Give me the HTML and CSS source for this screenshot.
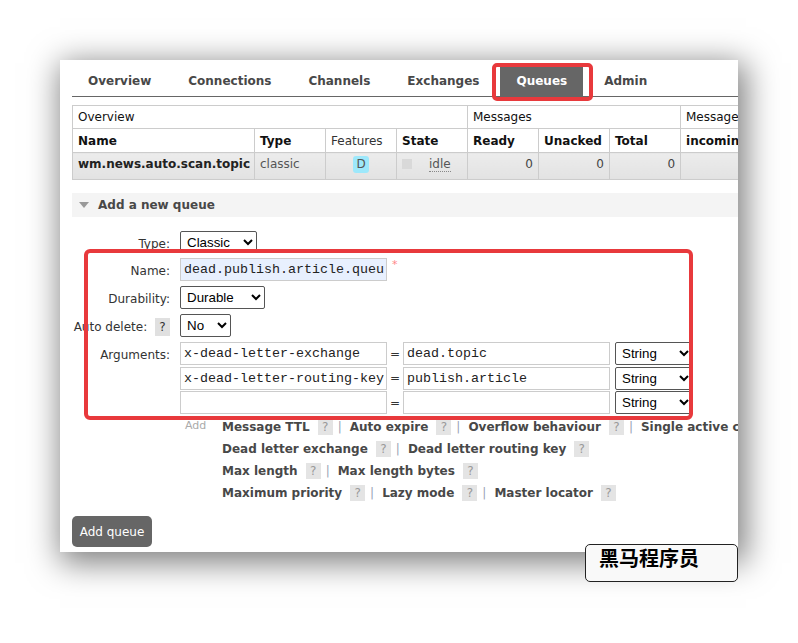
FILE: index.html
```html
<!DOCTYPE html>
<html lang="en">
<head>
<meta charset="utf-8">
<title>Queues</title>
<link rel="stylesheet" href="styles.css">
</head>
<body>
<div class="page">
  <div class="shot">
    <nav class="tabs">
      <a class="tab">Overview</a>
      <a class="tab">Connections</a>
      <a class="tab">Channels</a>
      <a class="tab">Exchanges</a>
      <a class="tab active">Queues</a>
      <a class="tab">Admin</a>
    </nav>

    <table class="qt">
      <colgroup>
        <col class="c-name"><col class="c-sm"><col class="c-sm"><col class="c-sm"><col class="c-sm"><col class="c-sm"><col class="c-sm"><col class="c-wide">
      </colgroup>
      <thead>
        <tr class="grp"><th colspan="4">Overview</th><th colspan="3">Messages</th><th>Message rates</th></tr>
        <tr class="hdr"><th>Name</th><th>Type</th><th class="light">Features</th><th>State</th><th>Ready</th><th>Unacked</th><th>Total</th><th>incoming</th></tr>
      </thead>
      <tbody>
        <tr class="row">
          <td class="name">wm.news.auto.scan.topic</td>
          <td class="type">classic</td>
          <td class="feat"><span class="badge">D</span></td>
          <td class="state"><span class="dot"></span><span class="idle">idle</span></td>
          <td class="num">0</td>
          <td class="num">0</td>
          <td class="num">0</td>
          <td></td>
        </tr>
      </tbody>
    </table>

    <section class="section">
      <h2 class="section-title"><span class="tri"></span>Add a new queue</h2>
      <form class="form">
        <label class="lbl">Type:</label>
        <div class="fld"><select class="sel w-type"><option>Classic</option></select></div>

        <label class="lbl">Name:</label>
        <div class="fld"><input class="txt name-in" value="dead.publish.article.queue"><span class="req">*</span></div>

        <label class="lbl">Durability:</label>
        <div class="fld"><select class="sel w-dur"><option>Durable</option></select></div>

        <label class="lbl">Auto delete: <span class="help dark">?</span></label>
        <div class="fld"><select class="sel w-no"><option>No</option></select></div>

        <label class="lbl lbl-top">Arguments:</label>
        <div class="args">
          <div class="arg"><input class="txt w-arg" value="x-dead-letter-exchange"><span class="eq">=</span><input class="txt w-arg" value="dead.topic"><select class="sel w-str"><option>String</option></select></div>
          <div class="arg"><input class="txt w-arg" value="x-dead-letter-routing-key"><span class="eq">=</span><input class="txt w-arg" value="publish.article"><select class="sel w-str"><option>String</option></select></div>
          <div class="arg"><input class="txt w-arg" value=""><span class="eq">=</span><input class="txt w-arg" value=""><select class="sel w-str"><option>String</option></select></div>
        </div>

        <div class="add-row">
          <span class="add">Add</span>
          <div class="links">
            <div class="line"><span class="lk">Message TTL</span><span class="help">?</span><span class="sep">|</span><span class="lk">Auto expire</span><span class="help">?</span><span class="sep">|</span><span class="lk">Overflow behaviour</span><span class="help">?</span><span class="sep">|</span><span class="lk">Single active consumer</span><span class="help">?</span></div>
            <div class="line"><span class="lk">Dead letter exchange</span><span class="help">?</span><span class="sep">|</span><span class="lk">Dead letter routing key</span><span class="help">?</span></div>
            <div class="line"><span class="lk">Max length</span><span class="help">?</span><span class="sep">|</span><span class="lk">Max length bytes</span><span class="help">?</span></div>
            <div class="line"><span class="lk">Maximum priority</span><span class="help">?</span><span class="sep">|</span><span class="lk">Lazy mode</span><span class="help">?</span><span class="sep">|</span><span class="lk">Master locator</span><span class="help">?</span></div>
          </div>
        </div>
      </form>
      <button class="btn" type="button">Add queue</button>
    </section>

    <div class="mark mark-form"></div>
  </div>
  <div class="watermark">黑马程序员</div>
</div>
</body>
</html>
```

FILE: styles.css
```css
html, body {
  margin: 0;
  background: #fff;
}
body {
  font-family: "DejaVu Sans", Verdana, sans-serif;
  font-size: 12px;
  color: #222;
  overflow: hidden;
}
.page {
  position: relative;
  padding: 60px 0 0 60px;
  height: 643px;
  box-sizing: border-box;
}
.shot {
  position: relative;
  width: 678px;
  height: 492px;
  box-sizing: border-box;
  padding-left: 12px;
  background: #fff;
  overflow: hidden;
  box-shadow: 4px 7px 30px 4px rgba(0, 0, 0, 0.5);
}

/* tabs */
.tabs {
  display: flex;
  margin-top: 6px;
  border-bottom: 1px solid #666;
  width: 700px;
}
.tab {
  position: relative;
  display: block;
  padding: 0 16px;
  margin-right: 5px;
  line-height: 30px;
  font-weight: bold;
  font-size: 12px;
  color: #484848;
}
.tab.active {
  background: #666;
  color: #fff;
}
.tab.active::after {
  content: "";
  position: absolute;
  top: -3px;
  left: -8px;
  right: -10px;
  bottom: -5px;
  border: 4px solid #e8393c;
  border-radius: 5px;
}

/* table */
.qt {
  margin-top: 8px;
  border-collapse: collapse;
  table-layout: fixed;
  width: 749px;
}
.c-name { width: 182px; }
.c-sm { width: 71px; }
.c-wide { width: 141px; }
.qt th, .qt td {
  border: 1px solid #ccc;
  padding: 0 5px;
  text-align: left;
  white-space: nowrap;
  overflow: hidden;
}
.grp th {
  height: 22px;
  font-weight: normal;
  color: #111;
}
.hdr th {
  height: 23px;
  font-weight: bold;
  color: #111;
}
.hdr th.light {
  font-weight: normal;
  color: #333;
}
.row td {
  height: 23px;
  padding-top: 3px;
  padding-bottom: 0;
  vertical-align: top;
  line-height: 17px;
  background: linear-gradient(#ececec, #e2e2e2);
}
.row td.name {
  font-weight: bold;
  color: #222;
}
.row td.type {
  color: #555;
}
.row td.feat {
  text-align: center;
}
.badge {
  display: inline-block;
  width: 16px;
  height: 17px;
  line-height: 17px;
  border-radius: 3px;
  background: #9de8fb;
  color: #555;
  text-align: center;
}
.state .dot {
  display: inline-block;
  width: 10px;
  height: 10px;
  background: #d9d9d9;
  vertical-align: -1px;
}
.state .idle {
  margin-left: 17px;
  color: #555;
  border-bottom: 1px dotted #888;
}
.row td.num {
  text-align: right;
  color: #444;
}

/* section */
.section-title {
  margin: 13px 0 0 0;
  height: 24px;
  line-height: 24px;
  background: #f4f4f4;
  font-size: 12px;
  font-weight: bold;
  color: #484848;
  display: flex;
  align-items: center;
}
.tri {
  width: 0;
  height: 0;
  margin: 0 9px 0 7px;
  border-left: 5px solid transparent;
  border-right: 5px solid transparent;
  border-top: 6px solid #999;
}
.form {
  margin-top: 14px;
  display: grid;
  grid-template-columns: 98px auto;
  column-gap: 10px;
  row-gap: 5px;
}
.lbl {
  text-align: right;
  white-space: nowrap;
  color: #333;
  align-self: center;
  padding-top: 3px;
}
.lbl-top {
  align-self: start;
  padding-top: 6px;
}
.fld {
  display: flex;
  align-items: flex-start;
}
.sel {
  height: 23px;
  box-sizing: border-box;
  font-family: "Liberation Sans", Arial, sans-serif;
  font-size: 13.33px;
  color: #000;
  background: #fff;
  border: 1px solid #555;
  border-radius: 2px;
  padding: 0 2px;
}
.w-type { width: 77px; height: 22px; }
.w-dur { width: 85px; }
.w-no { width: 51px; }
.w-str { width: 78px; margin-left: 5px; }
.txt {
  height: 23px;
  box-sizing: border-box;
  border: 1px solid #ccc;
  padding: 0 2px 0 3px;
  font-family: "Liberation Mono", "Courier New", monospace;
  font-size: 13.33px;
  color: #222;
  background: #fff;
  outline: none;
}
.name-in {
  width: 207px;
  background: #e8f0fe;
}
.req {
  margin-left: 5px;
  color: #f88;
  font-size: 11px;
  line-height: 14px;
}
.args {
  display: flex;
  flex-direction: column;
  gap: 1.5px;
}
.arg {
  display: flex;
  align-items: center;
}
.w-arg { width: 207px; }
.eq {
  width: 16px;
  text-align: center;
  color: #333;
}
.help {
  display: inline-block;
  width: 15px;
  height: 16px;
  line-height: 16px;
  text-align: center;
  background: #e4e4e4;
  color: #999;
  font-weight: normal;
  margin-left: 8px;
}
.help.dark {
  height: 18px;
  line-height: 18px;
  margin-left: 4px;
  background: #e0e0e0;
  color: #333;
}
.add-row {
  grid-column: 2;
  display: flex;
  align-items: flex-start;
  margin-top: -3px;
}
.add {
  width: 37px;
  padding-left: 5px;
  font-size: 11px;
  line-height: 20px;
  color: #aaa;
}
.links {
  display: flex;
  flex-direction: column;
}
.line {
  display: flex;
  align-items: center;
  height: 22px;
  white-space: nowrap;
}
.lk {
  font-weight: bold;
  color: #484848;
}
.sep {
  margin: 0 8px 0 5px;
  color: #9aa3b5;
}
.btn {
  display: block;
  margin-top: 12px;
  width: 80px;
  height: 31px;
  border: 0;
  border-radius: 5px;
  background: #666;
  color: #fff;
  font-family: "DejaVu Sans", Verdana, sans-serif;
  font-size: 12px;
  padding: 0;
}

/* highlight overlay */
.mark {
  position: absolute;
  border: 4px solid #e8393c;
  border-radius: 6px;
  box-sizing: border-box;
}
.mark-form {
  left: 24px;
  top: 189px;
  width: 609px;
  height: 171px;
}

/* watermark label */
.watermark {
  position: absolute;
  left: 585px;
  top: 544px;
  width: 153px;
  height: 38px;
  box-sizing: border-box;
  padding: 0 0 0 13px;
  border: 1px solid #222;
  border-radius: 5px;
  background: #f9f9f9;
  font-family: "Noto Sans CJK SC", sans-serif;
  font-weight: bold;
  font-size: 20px;
  line-height: 26px;
  color: #000;
}
```
